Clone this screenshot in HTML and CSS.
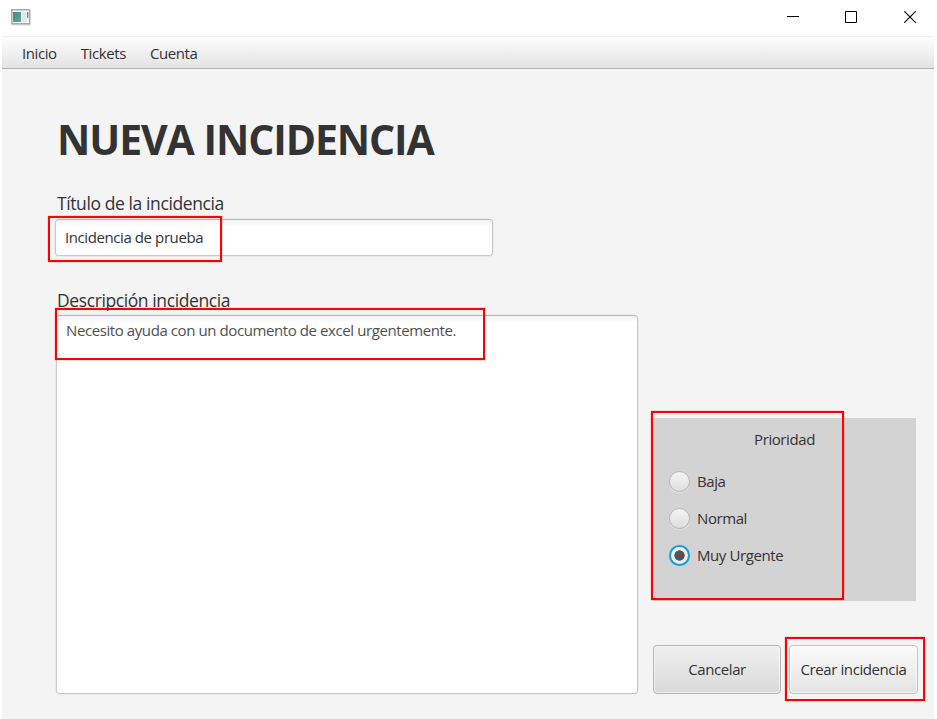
FILE: index.html
```html
<!DOCTYPE html>
<html lang="es">
<head>
<meta charset="utf-8">
<title>Nueva incidencia</title>
<link rel="stylesheet" href="styles.css">
</head>
<body>
<div class="window">
  <header class="titlebar">
    <svg class="app-icon" width="20" height="17" viewBox="0 0 20 17">
      <defs><linearGradient id="pane" x1="0" y1="0" x2="1" y2="1"><stop offset="0" stop-color="#4a80a8"/><stop offset="1" stop-color="#5cb082"/></linearGradient></defs>
      <rect x="1" y="15" width="18" height="1.5" fill="#dedede"/>
      <rect x=".75" y=".75" width="18" height="14" fill="#f5f5f7" stroke="#a5a7ad" stroke-width="1.4"/>
      <rect x="2" y="3" width="8" height="10" fill="url(#pane)"/>
      <rect x="11" y="3" width="4" height="10" fill="#e5e7e9"/>
      <rect x="16" y="3" width="1.4" height="6" fill="url(#pane)"/>
    </svg>
    <div class="controls">
      <svg width="12" height="12" viewBox="0 0 12 12"><path d="M0 5.5h12" /></svg>
      <svg width="12" height="12" viewBox="0 0 12 12"><path d="M.5.5h11v11H.5z"/></svg>
      <svg class="close" width="12" height="12" viewBox="0 0 12 12"><path d="M.3.3l11.4 11.4M11.7.3L.3 11.7"/></svg>
    </div>
  </header>
  <nav class="menubar">
    <span>Inicio</span><span>Tickets</span><span>Cuenta</span>
  </nav>
  <main class="content">
    <h1>NUEVA INCIDENCIA</h1>
    <div class="label label-title">Título de la incidencia</div>
    <div class="field">Incidencia de prueba</div>
    <div class="label label-desc">Descripción incidencia</div>
    <div class="columns">
      <div class="area">Necesito ayuda con un documento de excel urgentemente.</div>
      <aside class="side">
        <section class="priority">
          <div class="priority-title">Prioridad</div>
          <div class="option"><i class="radio"></i><span>Baja</span></div>
          <div class="option"><i class="radio"></i><span>Normal</span></div>
          <div class="option"><i class="radio selected"></i><span>Muy Urgente</span></div>
        </section>
        <div class="buttons">
          <div class="button">Cancelar</div>
          <div class="button primary">Crear incidencia</div>
        </div>
      </aside>
    </div>
  </main>
</div>
<div class="mark mark-title"></div>
<div class="mark mark-desc"></div>
<div class="mark mark-priority"></div>
<div class="mark mark-create"></div>
</body>
</html>
```
FILE: styles.css
```css
* { box-sizing: border-box; }
body {
  margin: 0;
  background: #fff;
  color: #333;
  font: 15px/20px "Open Sans", "Noto Sans", sans-serif;
  letter-spacing: -0.41px;
  white-space: nowrap;
}
.window { width: 937px; height: 719px; padding: 0 3px 0 2px; overflow: hidden; display: flex; flex-direction: column; }
.titlebar { height: 36px; flex: none; display: flex; justify-content: space-between; align-items: flex-start; padding: 9px 18px 0 9px; }
.controls { display: flex; gap: 46px; padding-top: 2px; }
.controls svg { fill: none; stroke: #000; stroke-width: 1; display: block; }
.controls .close { margin-left: 1px; stroke-width: 1.1; }
.menubar {
  height: 33px; flex: none; display: flex; gap: 24px; padding: 6px 20px 0;
  border-top: 1px solid #f0f0f0; border-bottom: 1px solid #b4b4b4;
  background: linear-gradient(#fdfdfd, #e3e3e3);
}
.content { flex: 1; background: #f4f4f4; padding: 46px 18px 0 54px; }
h1 { margin: 0; padding-left: 1px; font-size: 41px; line-height: 48px; font-weight: 700; letter-spacing: -1.08px; }
.label { font-size: 17.5px; line-height: 24px; padding-left: 1px; letter-spacing: -0.4px; }
.label-title { margin-top: 28px; }
.label-desc { margin-top: 32px; }
.field, .area {
  background: linear-gradient(#f1f1f1, #fff 6px);
  border: 1px solid #c8c8c8; border-top-color: #b9b9b9; border-radius: 4px;
  box-shadow: 0 0 0 .5px #e2e2e2;
}
.field { width: 438px; height: 37px; margin: 4px 0 0 -1px; padding: 7px 9px 0; }
.columns { display: grid; grid-template-columns: 582px 265px; column-gap: 15px; margin-top: 3px; }
.area { height: 379px; padding: 4px 9px; color: #505050; }
.side { display: flex; flex-direction: column; justify-content: flex-end; }
.priority { width: 263px; height: 183px; background: #d3d3d3; padding: 11px 0 0 16px; margin-bottom: 44px; }
.priority-title { text-align: center; margin-left: -16px; margin-bottom: 13px; }
.option { display: flex; align-items: center; gap: 7px; height: 37px; }
.radio {
  width: 21px; height: 21px; border-radius: 50%; flex: none; margin-top: 2px;
  border: 1px solid #b5b5b5; background: linear-gradient(#f5f5f5, #dedede);
  box-shadow: 0 1px 0 #e5e5e5;
}
.radio.selected {
  border: 2px solid #1a9fd0; box-shadow: 0 0 1px #5eb8da;
  background: radial-gradient(circle, #535353 4.8px, #eee 5.5px);
}
.buttons { display: flex; gap: 8px; height: 49px; }
.button {
  width: 128px; border: 1px solid #b5b5b5; border-radius: 4px; display: flex; align-items: center; justify-content: center;
  padding-bottom: 2px;
  background: linear-gradient(#efefef, #d9d9d9); box-shadow: inset 0 0 0 1px rgba(255,255,255,.55);
}
.primary { width: 129px; background: linear-gradient(#fbfbfb, #e3e3e3); border-color: #c2c2c2; }
.mark { position: absolute; border: 2px solid #f00; box-shadow: 0 0 1px rgba(255,0,0,.7); }
.mark-title { left: 48px; top: 216px; width: 174px; height: 46px; }
.mark-desc { left: 55px; top: 308px; width: 430px; height: 52px; }
.mark-priority { left: 651px; top: 411px; width: 193px; height: 189px; }
.mark-create { left: 785px; top: 637px; width: 140px; height: 64px; }
```
